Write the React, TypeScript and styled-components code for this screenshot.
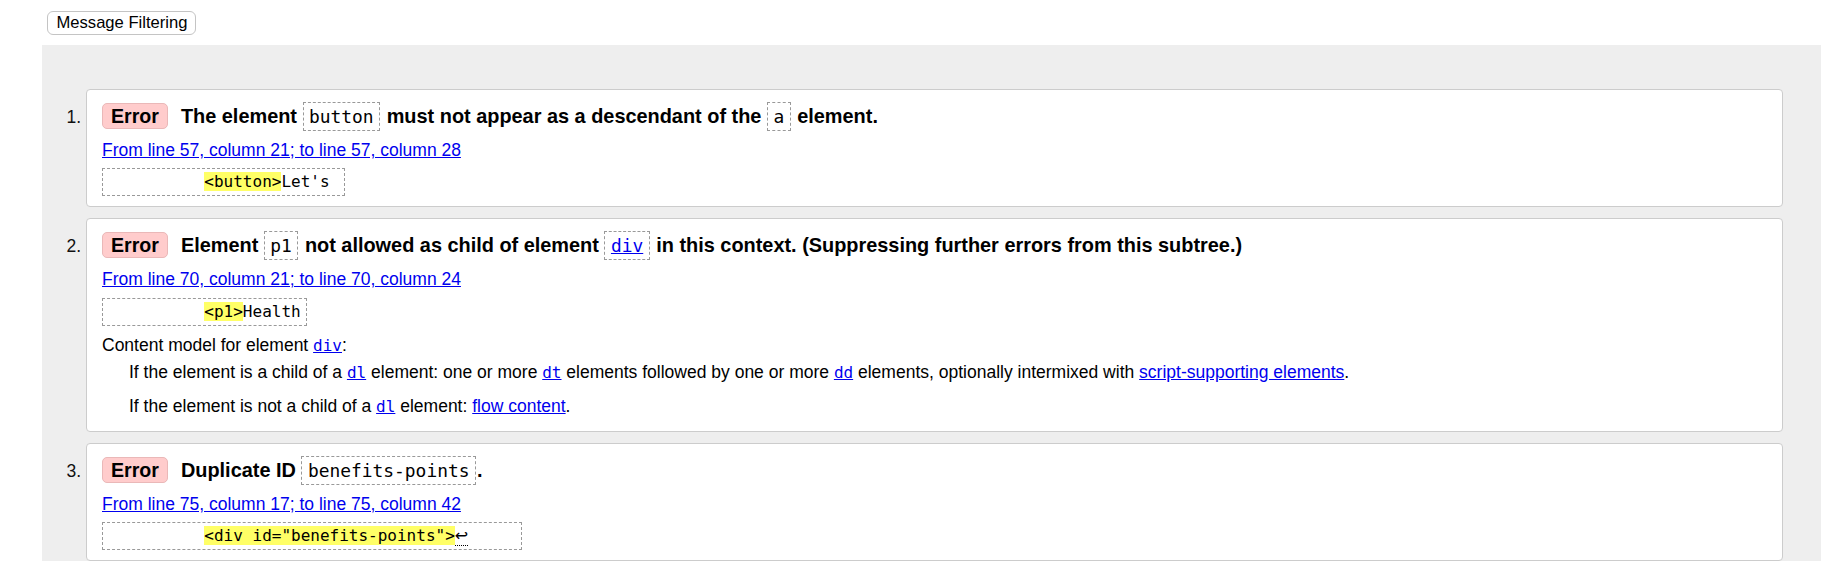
import React from "react";
import styled, { createGlobalStyle } from "styled-components";

const GlobalStyle = createGlobalStyle`
  html, body {
    margin: 0;
    padding: 0;
    overflow: hidden;
    background: #fff;
  }
  body {
    font-family: "Liberation Sans", Arial, sans-serif;
    color: #000;
  }
`;

const Page = styled.div`
  display: flex;
  flex-direction: column;
`;

const TopBar = styled.div`
  display: flex;
  padding: 11px 0 0 47px;
`;

const FilterButton = styled.button`
  font-family: "Liberation Sans", Arial, sans-serif;
  font-size: 16.6px;
  line-height: 19.7px;
  padding: 1px 8px 1px 8.5px;
  background: #fff;
  color: #000;
  border: 1px solid #c4c4c4;
  border-radius: 6px;
`;

const Panel = styled.div`
  margin: 10px 0 0 42px;
  background: #eee;
  padding: 44px 38px 0 44px;
`;

const List = styled.ol`
  margin: 0;
  padding: 0;
  list-style: decimal outside;
`;

const Card = styled.li`
  background: #fff;
  border: 1px solid #ccc;
  border-radius: 4px;
  padding: 12px 15px 10px 15px;
  margin-bottom: 11px;
  font-size: 17.5px;
  &::marker {
    color: #111;
  }
`;

const Title = styled.p`
  margin: 0;
  font-size: 19.9px;
  font-weight: bold;
  line-height: 29px;
`;

const Badge = styled.span`
  display: inline-block;
  background: #fcc;
  border: 1px solid #eab8b8;
  border-radius: 5px;
  padding: 0 8px;
  font-size: 19.6px;
  line-height: 24px;
  margin-right: 13px;
`;

const Code = styled.code`
  display: inline-block;
  font-family: "DejaVu Sans Mono", monospace;
  font-weight: normal;
  font-size: 17.9px;
  line-height: 25px;
  padding: 1px 5.5px;
  border: 1px dashed #999;
  margin: 0 1px 0 0;
  a {
    color: #00e;
  }
`;

const Location = styled.p`
  margin: 9px 0 0;
  line-height: 20px;
  a {
    color: #00e;
  }
`;

const Extract = styled.pre`
  display: block;
  width: fit-content;
  margin: 8.5px 0 0;
  border: 1px dashed #999;
  padding: 3px 5px;
  font-family: "DejaVu Sans Mono", monospace;
  font-size: 16px;
  line-height: 20px;
  white-space: pre;
`;

const Mark = styled.mark`
  background: #ff6;
  color: inherit;
`;

const Lf = styled.abbr`
  font-family: "DejaVu Sans", sans-serif;
  text-decoration: none;
  border-bottom: 1px dotted #000;
`;

const Details = styled.div`
  margin: 9.3px 0 4.5px;
  line-height: 20px;
`;

const DetailsHead = styled.p`
  margin: 0;
`;

const DetailsItem = styled.p<{ $gap: number }>`
  margin: ${(p) => p.$gap}px 0 0;
  padding-left: 27px;
`;

const TextLink = styled.a`
  color: #00e;
`;

const CodeLink = styled.a`
  color: #00e;
  font-family: "DejaVu Sans Mono", monospace;
  font-size: 16px;
  line-height: 1;
`;

export default function App() {
  return (
    <Page>
      <GlobalStyle />
      <TopBar>
        <FilterButton>Message Filtering</FilterButton>
      </TopBar>
      <Panel>
        <List>
          <Card>
            <Title>
              <Badge>Error</Badge>The element <Code>button</Code> must not appear as a descendant of the <Code>a</Code> element.
            </Title>
            <Location>
              <a href="#l57">From line 57, column 21; to line 57, column 28</a>
            </Location>
            <Extract>
              {"          "}
              <Mark>{"<button>"}</Mark>
              {"Let's "}
            </Extract>
          </Card>
          <Card>
            <Title>
              <Badge>Error</Badge>Element <Code>p1</Code> not allowed as child of element <Code><a href="#div">div</a></Code> in this context. (Suppressing further errors from this subtree.)
            </Title>
            <Location>
              <a href="#l70">From line 70, column 21; to line 70, column 24</a>
            </Location>
            <Extract>
              {"          "}
              <Mark>{"<p1>"}</Mark>
              {"Health"}
            </Extract>
            <Details>
              <DetailsHead>
                Content model for element <CodeLink href="#div">div</CodeLink>:
              </DetailsHead>
              <DetailsItem $gap={7}>
                If the element is a child of a <CodeLink href="#dl">dl</CodeLink> element: one or more <CodeLink href="#dt">dt</CodeLink> elements followed by one or more <CodeLink href="#dd">dd</CodeLink> elements, optionally intermixed with <TextLink href="#script">script-supporting elements</TextLink>.
              </DetailsItem>
              <DetailsItem $gap={14}>
                If the element is not a child of a <CodeLink href="#dl">dl</CodeLink> element: <TextLink href="#flow">flow content</TextLink>.
              </DetailsItem>
            </Details>
          </Card>
          <Card>
            <Title>
              <Badge>Error</Badge>Duplicate ID <Code>benefits-points</Code>.
            </Title>
            <Location>
              <a href="#l75">From line 75, column 17; to line 75, column 42</a>
            </Location>
            <Extract>
              {"          "}
              <Mark>{'<div id="benefits-points">'}</Mark>
              <Lf title="Line break">↩</Lf>
              {"     "}
            </Extract>
          </Card>
        </List>
      </Panel>
    </Page>
  );
}
